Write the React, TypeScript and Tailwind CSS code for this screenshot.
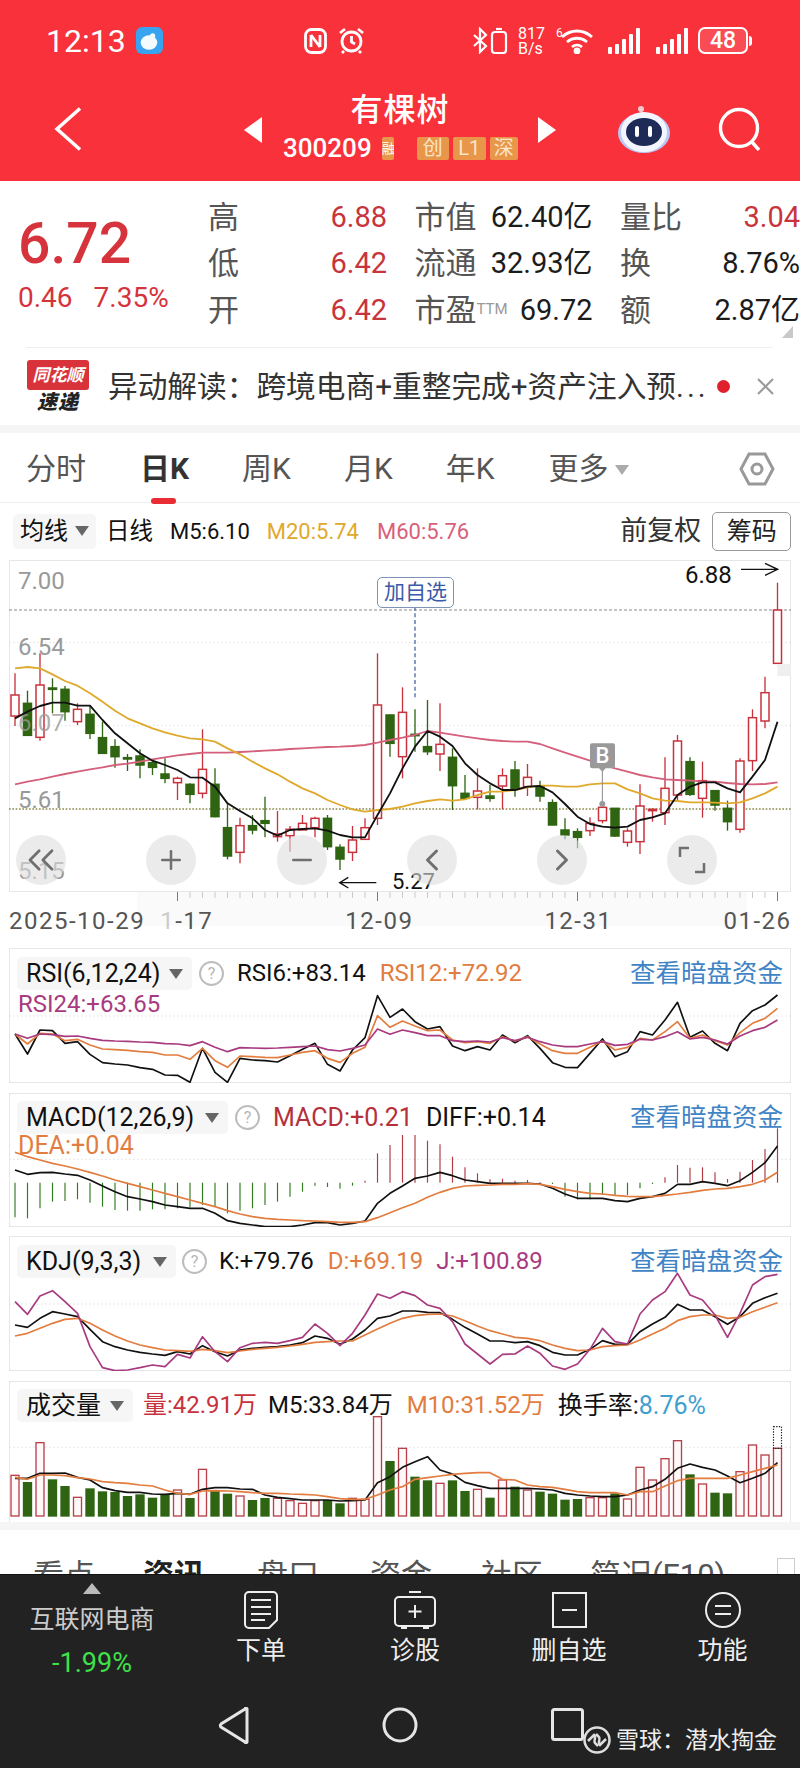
import type { ReactNode } from 'react';
import { ChevronLeft, ChevronRight, ChevronsLeft, Minus, Plus } from 'lucide-react';

const RED = '#c8323c';
const GREEN = '#2f6512';
const BLACK = '#111111';
const ORANGE = '#e27d3f';
const GOLD = '#dfa92c';
const PINK = '#d4607c';
const PURPLE = '#a83a7f';

// 蜡烛数据: [最高, 实体上, 实体下, 最低, 0红/1绿] 坐标为3倍像素
const candles: number[][] = [
  [700, 765, 828, 858, 0], [752, 790, 886, 888, 1], [640, 735, 892, 902, 0], [715, 744, 748, 820, 1],
  [738, 748, 815, 842, 1], [790, 808, 845, 855, 0], [795, 823, 880, 897, 1], [845, 893, 940, 940, 1],
  [898, 920, 950, 983, 1], [942, 953, 957, 993, 1], [928, 948, 975, 1015, 1], [958, 968, 982, 1005, 1],
  [955, 1002, 1015, 1030, 1], [1010, 1015, 1028, 1080, 0], [1030, 1033, 1063, 1090, 1], [868, 988, 1060, 1075, 0],
  [985, 1033, 1130, 1132, 1], [1090, 1163, 1248, 1258, 1], [1133, 1157, 1237, 1270, 0], [1125, 1157, 1170, 1183, 1],
  [1070, 1142, 1150, 1192, 1], [1113, 1182, 1190, 1205, 0], [1158, 1168, 1187, 1235, 0], [1125, 1150, 1170, 1170, 0],
  [1130, 1135, 1163, 1192, 0], [1125, 1135, 1220, 1230, 1], [1213, 1222, 1257, 1290, 1], [1158, 1200, 1237, 1263, 0],
  [1135, 1163, 1198, 1200, 0], [640, 795, 1135, 1155, 0], [823, 825, 910, 950, 1], [742, 817, 950, 1015, 0],
  [808, 883, 887, 935, 1], [780, 920, 935, 945, 1], [790, 913, 942, 993, 0], [925, 952, 1037, 1110, 1],
  [1005, 1060, 1075, 1075, 1], [985, 1053, 1072, 1108, 0], [1035, 1068, 1075, 1085, 1], [985, 1007, 1038, 1108, 0],
  [963, 990, 1045, 1070, 1], [972, 1012, 1040, 1068, 0], [1022, 1040, 1068, 1085, 1], [1078, 1088, 1155, 1155, 1],
  [1135, 1170, 1185, 1198, 1], [1165, 1175, 1192, 1225, 1], [1132, 1150, 1172, 1188, 0], [1095, 1102, 1142, 1150, 0],
  [1105, 1105, 1188, 1190, 1], [1165, 1173, 1207, 1220, 0], [1033, 1098, 1205, 1242, 0], [1105, 1108, 1112, 1145, 0],
  [952, 1045, 1118, 1155, 0], [885, 903, 1065, 1085, 0], [952, 965, 1063, 1068, 1], [965, 1022, 1075, 1133, 0],
  [1050, 1052, 1095, 1112, 1], [1082, 1105, 1145, 1172, 1], [955, 963, 1168, 1178, 0], [808, 833, 962, 993, 0],
  [710, 758, 843, 865, 0], [428, 510, 670, 670, 0],
];

const m5 = [835, 815, 798, 788, 788, 797, 797, 840, 880, 910, 940, 962, 975, 990, 1012, 1013, 1040, 1090, 1113, 1135, 1170, 1187, 1170, 1167, 1165, 1172, 1185, 1192, 1192, 1125, 1060, 985, 920, 873, 890, 918, 970, 1005, 1030, 1050, 1050, 1040, 1038, 1057, 1092, 1130, 1152, 1160, 1163, 1160, 1140, 1132, 1120, 1065, 1040, 1027, 1027, 1045, 1057, 1010, 960, 845];
const m20 = [685, 681, 685, 703, 723, 737, 760, 785, 812, 835, 850, 865, 877, 887, 895, 898, 905, 925, 943, 965, 985, 1003, 1025, 1045, 1060, 1080, 1095, 1108, 1115, 1110, 1107, 1100, 1090, 1083, 1078, 1082, 1078, 1065, 1055, 1055, 1050, 1042, 1037, 1037, 1040, 1040, 1033, 1030, 1030, 1048, 1060, 1075, 1082, 1083, 1087, 1087, 1088, 1090, 1087, 1075, 1060, 1040];
const m60 = [1033, 1025, 1018, 1010, 1002, 995, 988, 982, 975, 971, 965, 958, 952, 946, 942, 938, 938, 938, 936, 934, 932, 930, 927, 925, 923, 921, 920, 918, 915, 908, 900, 893, 885, 873, 878, 884, 890, 895, 900, 903, 905, 905, 912, 925, 938, 950, 962, 974, 985, 995, 1005, 1012, 1018, 1020, 1022, 1024, 1025, 1029, 1032, 1033, 1032, 1027];

const rsi6 = [282, 342, 270, 272, 310, 305, 343, 368, 372, 375, 383, 388, 405, 406, 427, 325, 397, 427, 355, 360, 362, 366, 347, 328, 310, 373, 393, 330, 293, 167, 232, 207, 245, 267, 260, 318, 332, 320, 330, 285, 308, 287, 325, 368, 382, 383, 340, 297, 350, 335, 275, 285, 240, 187, 292, 273, 310, 332, 250, 212, 195, 165];
const rsi12 = [282, 312, 280, 282, 302, 298, 315, 327, 329, 331, 335, 337, 345, 345, 358, 325, 362, 382, 348, 350, 352, 353, 345, 337, 332, 355, 367, 340, 322, 227, 262, 243, 258, 272, 270, 300, 308, 305, 310, 290, 303, 290, 312, 332, 340, 340, 322, 303, 330, 322, 295, 300, 275, 245, 295, 285, 302, 315, 278, 250, 235, 205];
const rsi24 = [282, 295, 282, 284, 289, 288, 295, 301, 303, 304, 306, 307, 311, 312, 317, 305, 322, 335, 323, 324, 325, 324, 322, 320, 318, 329, 333, 325, 315, 267, 283, 270, 278, 287, 287, 302, 305, 303, 306, 293, 302, 292, 305, 315, 320, 320, 312, 305, 316, 313, 298, 300, 290, 275, 297, 292, 300, 312, 288, 272, 262, 240];

const diff = [690, 703, 698, 697, 702, 706, 720, 738, 755, 770, 777, 785, 795, 800, 805, 805, 820, 842, 850, 855, 860, 860, 860, 855, 848, 848, 855, 850, 843, 790, 760, 738, 715, 708, 697, 707, 720, 725, 730, 730, 730, 730, 732, 745, 762, 775, 775, 775, 782, 785, 775, 770, 760, 733, 733, 725, 730, 737, 722, 697, 668, 618];
const dea = [637, 650, 660, 670, 678, 687, 697, 708, 720, 730, 740, 750, 760, 770, 780, 790, 800, 812, 822, 830, 835, 838, 840, 842, 843, 845, 847, 847, 845, 833, 818, 803, 790, 772, 757, 745, 738, 736, 735, 733, 733, 731, 733, 740, 748, 755, 760, 762, 766, 769, 770, 770, 766, 762, 757, 751, 747, 745, 740, 733, 720, 697];
const macdBars = [832, 835, 805, 785, 783, 778, 788, 800, 810, 812, 812, 808, 808, 805, 802, 795, 798, 820, 812, 805, 795, 785, 770, 755, 737, 741, 746, 737, 722, 640, 615, 585, 585, 602, 613, 650, 682, 700, 718, 716, 722, 720, 726, 732, 770, 778, 778, 765, 765, 765, 745, 732, 712, 675, 683, 682, 697, 717, 695, 660, 627, 565];

const kdjK = [285, 292, 265, 245, 252, 260, 298, 335, 350, 360, 367, 372, 376, 365, 372, 347, 365, 378, 360, 355, 352, 350, 345, 338, 318, 325, 343, 327, 300, 265, 258, 243, 243, 247, 248, 268, 292, 312, 333, 333, 338, 335, 347, 367, 375, 375, 358, 332, 343, 343, 305, 282, 262, 223, 240, 240, 260, 283, 260, 220, 203, 190];
const kdjD = [318, 310, 295, 280, 268, 265, 280, 300, 318, 333, 345, 353, 360, 362, 364, 358, 362, 368, 363, 358, 355, 352, 348, 343, 337, 335, 333, 333, 315, 297, 280, 265, 257, 253, 252, 258, 272, 288, 302, 312, 322, 325, 332, 345, 355, 362, 360, 350, 347, 345, 330, 312, 295, 272, 260, 255, 255, 265, 262, 245, 232, 218];
const kdjJ = [215, 253, 198, 182, 215, 250, 350, 413, 422, 420, 413, 405, 410, 373, 384, 320, 365, 395, 353, 340, 337, 340, 332, 322, 282, 310, 347, 310, 255, 192, 205, 185, 197, 225, 235, 275, 342, 372, 402, 373, 372, 348, 370, 408, 418, 402, 358, 295, 335, 342, 252, 210, 185, 130, 195, 210, 255, 322, 250, 165, 140, 133];

// 成交量: [柱顶, 0红/1绿]
const volume: number[][] = [
  [736, 0], [758, 1], [638, 0], [750, 1], [770, 1], [802, 0], [777, 1], [786, 1], [788, 1], [800, 1], [795, 1], [805, 1], [795, 1], [780, 0], [806, 1], [718, 0],
  [785, 1], [793, 1], [798, 0], [812, 1], [806, 1], [805, 0], [812, 0], [820, 0], [812, 0], [812, 1], [822, 1], [805, 0], [808, 0], [560, 0], [695, 1], [655, 0],
  [742, 1], [753, 1], [760, 0], [753, 1], [785, 1], [778, 0], [805, 1], [750, 0], [772, 1], [780, 0], [787, 1], [793, 1], [811, 1], [809, 1], [803, 0], [803, 0],
  [792, 1], [807, 0], [712, 0], [750, 0], [686, 0], [632, 0], [735, 1], [762, 0], [790, 1], [792, 1], [725, 0], [645, 0], [675, 0], [655, 0],
];
const volM5 = [745, 745, 730, 730, 729, 742, 750, 773, 782, 787, 787, 792, 793, 790, 793, 778, 773, 773, 777, 778, 795, 802, 806, 810, 810, 810, 813, 812, 810, 758, 740, 712, 695, 680, 720, 732, 757, 767, 775, 775, 775, 775, 777, 780, 790, 795, 798, 800, 800, 795, 780, 770, 748, 715, 702, 712, 720, 738, 758, 745, 730, 698];
const volM10 = [742, 748, 735, 735, 737, 743, 747, 755, 758, 760, 765, 768, 780, 790, 793, 783, 782, 783, 785, 788, 790, 790, 792, 793, 795, 800, 806, 808, 808, 795, 780, 770, 748, 743, 738, 733, 730, 728, 728, 748, 750, 765, 770, 772, 778, 785, 788, 788, 788, 795, 785, 785, 768, 752, 745, 745, 745, 745, 735, 725, 715, 705];

const xAt = (i: number) => 45 + 37.5 * i;

function Series({ data, color, width = 5 }: { data: number[]; color: string; width?: number }) {
  const points = data.map((y, i) => `${xAt(i)},${y}`).join(' ');
  return <polyline points={points} fill="none" stroke={color} strokeWidth={width} strokeLinejoin="round" />;
}

function GridLine({ y, color = '#e4e4e4', dash = '5 7', width = 3 }: { y: number; color?: string; dash?: string; width?: number }) {
  return <line x1={27} x2={2373} y1={y} y2={y} stroke={color} strokeWidth={width} strokeDasharray={dash} />;
}

// 指标面板的绘图层, y0 是面板顶部在3倍坐标里的位置
function Plot({ y0, h, children }: { y0: number; h: number; children: ReactNode }) {
  return (
    <svg className="absolute -left-px -top-px" width={782} height={h} viewBox={`27 ${y0} 2346 ${h * 3}`}>
      {children}
    </svg>
  );
}

function Caret({ className = 'text-[#666]' }: { className?: string }) {
  return (
    <svg width="14" height="10" viewBox="0 0 14 10" className={`shrink-0 ${className}`}>
      <path d="M0 0h14L7 10z" fill="currentColor" />
    </svg>
  );
}

function Help() {
  return (
    <span className="flex h-[25px] w-[25px] shrink-0 items-center justify-center rounded-full border-2 border-[#bdbdbd] text-[16px] leading-none text-[#b5b5b5]">
      ?
    </span>
  );
}

function DarkLink() {
  return <span className="ml-auto whitespace-nowrap text-[25.500px] leading-[33px] text-[#3f84c6]">查看暗盘资金</span>;
}

function Chip({ label, className }: { label: string; className: string }) {
  return (
    <div className={`flex h-[33px] shrink-0 items-center justify-between rounded-[5px] bg-[#f6f6f6] pl-[9px] pr-[9px] text-[25px] text-[#111] ${className}`}>
      <span className="whitespace-nowrap">{label}</span>
      <Caret />
    </div>
  );
}

function SignalBars({ className }: { className: string }) {
  return (
    <div className={`flex shrink-0 items-end gap-[3px] ${className}`}>
      {[7, 10, 15, 20, 26].map((h) => (
        <span key={h} className="w-[4px] rounded-[1px] bg-white" style={{ height: h }} />
      ))}
    </div>
  );
}

function StatusBar() {
  return (
    <div className="relative flex h-[80px] items-center pl-[46px] pt-[1px] text-white">
      <span className="w-[90px] shrink-0 text-[32px] leading-none">12:13</span>
      <svg className="shrink-0" width="27" height="27" viewBox="0 0 26 26">
        <rect width="26" height="26" rx="6" fill="#38a4ef" />
        <ellipse cx="12.500" cy="15" rx="8" ry="7" fill="#f4fbff" />
        <circle cx="16" cy="8.500" r="2.500" fill="#f4fbff" />
      </svg>
      <div className="ml-[141px] flex shrink-0 items-center gap-[11px]">
        <svg width="23" height="26" viewBox="0 0 23 26" fill="none" stroke="#fff" strokeWidth="2.800">
          <rect x="1.500" y="1.500" width="20" height="23" rx="6" />
          <path d="M7 7v12M7 7l9 12M16 7v12" />
        </svg>
        <svg width="27" height="27" viewBox="0 0 27 27" fill="none" stroke="#fff" strokeWidth="2.800">
          <circle cx="13.500" cy="14.500" r="9.500" />
          <path d="M13.500 9v6l3.500 2M2 6l5-4M25 6l-5-4M6 24l-2 2M21 24l2 2" />
        </svg>
      </div>
      <div className="ml-[107px] flex shrink-0 items-center">
        <svg width="36" height="27" viewBox="0 0 36 27" fill="none" stroke="#fff" strokeWidth="2.200">
          <path d="M2 8l12 11-6 6V2l6 6L2 19" />
          <rect x="20" y="5" width="14" height="21" rx="3" />
          <path d="M24 2h6" />
        </svg>
        <div className="ml-[10px] flex w-[30px] flex-col text-[16px] leading-[15px]">
          <span>817</span>
          <span>B/s</span>
        </div>
        <div className="relative ml-[8px] h-[27px] w-[38px]">
          <span className="absolute left-0 top-0 text-[12px] leading-none">6</span>
          <svg width="38" height="27" viewBox="0 0 38 27" fill="none" stroke="#fff" strokeWidth="2.800">
            <path d="M6 10c9-8 21-8 30 0M11 15c6-5 14-5 20 0M16 20c3-2.500 7-2.500 10 0" />
            <circle cx="21" cy="24" r="2" fill="#fff" />
          </svg>
        </div>
        <SignalBars className="ml-[14px]" />
        <SignalBars className="ml-[16px]" />
        <div className="ml-[10px] flex shrink-0 items-center gap-[1px]">
          <div className="flex h-[27px] w-[50px] items-center justify-center rounded-[7px] border-2 border-white bg-[#ffffff22] text-[23px] font-medium leading-none">
            48
          </div>
          <span className="h-[10px] w-[3px] rounded-r-sm bg-white" />
        </div>
      </div>
    </div>
  );
}

function TitleBar() {
  return (
    <div className="relative flex h-[101px] items-start text-white">
      <svg className="ml-[54px] mt-[27px]" width="28" height="44" viewBox="0 0 28 44" fill="none" stroke="#fff" strokeWidth="3.500">
        <path d="M26 1.500 3 22l23 20.500" />
      </svg>
      <svg className="ml-[162px] mt-[37px]" width="18" height="26" viewBox="0 0 18 26">
        <path d="M18 0v26L0 13z" fill="#fff" />
      </svg>
      <div className="flex w-[276px] flex-col items-center">
        <span className="mt-[11px] text-[32px] font-medium leading-[38px] tracking-[1px]">有棵树</span>
        <div className="mt-[7px] flex w-full items-center pl-[21px]">
          <span className="text-[26px] font-medium leading-[24px]">300209</span>
          <span className="ml-[10px] h-[23px] w-[12px] overflow-hidden rounded-[2px] bg-[#e8974a] text-[13px] leading-[23px] text-white">融</span>
          <div className="ml-[23px] flex gap-[4px] text-[20px] leading-[23px] text-[#fbe4c8]">
            <span className="h-[23px] w-[32px] rounded-[2px] bg-[#e8974a] text-center">创</span>
            <span className="h-[23px] w-[33px] rounded-[2px] bg-[#e8974a] text-center">L1</span>
            <span className="h-[23px] w-[28px] rounded-[2px] bg-[#e8974a] text-center">深</span>
          </div>
        </div>
      </div>
      <svg className="mt-[37px]" width="18" height="26" viewBox="0 0 18 26">
        <path d="M0 0v26l18-13z" fill="#fff" />
      </svg>
      <svg className="ml-[61px] mt-[25px]" width="54" height="48" viewBox="0 0 54 48">
        <circle cx="24" cy="4" r="3" fill="#f5c9d0" />
        <path d="M24 6l3 6" stroke="#f5c9d0" strokeWidth="2" />
        <ellipse cx="27" cy="28" rx="26" ry="20" fill="#b8c8f4" />
        <ellipse cx="27" cy="27" rx="23" ry="20" fill="#f4f6ff" />
        <ellipse cx="27" cy="27" rx="18" ry="14" fill="#1d2b56" />
        <rect x="18" y="21" width="4" height="11" rx="2" fill="#fff" />
        <rect x="31" y="21" width="4" height="11" rx="2" fill="#fff" />
      </svg>
      <svg className="ml-[47px] mt-[27px]" width="44" height="44" viewBox="0 0 44 44" fill="none" stroke="#fff" strokeWidth="3.400">
        <circle cx="21" cy="21" r="18.500" />
        <path d="M33 34l8 9" />
      </svg>
    </div>
  );
}

function QuoteCell({ label, value, red, ttm }: { label: string; value: string; red?: boolean; ttm?: boolean }) {
  return (
    <div className="flex h-[46.500px] items-center justify-between whitespace-nowrap">
      <span className="text-[31px] leading-none text-[#555]">
        {label}
        {ttm && <span className="relative -top-[7px] text-[15px] text-[#999]">TTM</span>}
      </span>
      <span className={`text-[29px] leading-none ${red ? 'text-[#c8343c]' : 'text-[#1c1c1c]'}`}>{value}</span>
    </div>
  );
}

function Quote() {
  return (
    <div className="relative flex h-[167px] pt-[13px]">
      <div className="w-[208px] shrink-0 pl-[18px] text-[#d6343c]">
        <div className="mt-[15px] text-[57px] font-medium leading-[70px]">6.72</div>
        <div className="mt-[3px] flex gap-[21px] text-[28px] leading-[32px]">
          <span>0.46</span>
          <span>7.35%</span>
        </div>
      </div>
      <div className="grid flex-1 auto-rows-[46.500px] content-start grid-cols-[179px_178px_180px] gap-x-[27.500px]">
        <QuoteCell label="高" value="6.88" red />
        <QuoteCell label="市值" value="62.40亿" />
        <QuoteCell label="量比" value="3.04" red />
        <QuoteCell label="低" value="6.42" red />
        <QuoteCell label="流通" value="32.93亿" />
        <QuoteCell label="换" value="8.76%" />
        <QuoteCell label="开" value="6.42" red />
        <QuoteCell label="市盈" value="69.72" ttm />
        <QuoteCell label="额" value="2.87亿" />
      </div>
      <span className="absolute bottom-[10px] right-[7px] h-0 w-0 border-b-[12px] border-l-[11px] border-b-[#c9c9c9] border-l-transparent" />
      <div className="absolute bottom-0 left-[26px] right-[27px] h-px bg-[#efefef]" />
    </div>
  );
}

function NewsRow() {
  return (
    <div className="flex h-[77px] items-center">
      <div className="ml-[27px] flex w-[62px] shrink-0 flex-col items-center">
        <div className="h-[30px] w-full rounded-[3px] bg-[#d8333a] text-center text-[17px] font-bold italic leading-[30px] text-white">同花顺</div>
        <div className="text-[20px] font-black italic leading-[24px] tracking-[1px] text-[#222]">速递</div>
      </div>
      <span className="ml-[19px] w-[596px] shrink-0 whitespace-nowrap text-[29.700px] leading-none text-[#333]">
        异动解读：跨境电商+重整完成+资产注入预<span className="tracking-[3px]">...</span>
      </span>
      <span className="ml-[13px] h-[13px] w-[13px] shrink-0 rounded-full bg-[#e0212d]" />
      <svg className="ml-[27px] shrink-0" width="17" height="17" viewBox="0 0 17 17" stroke="#999" strokeWidth="2">
        <path d="M1 1l15 15M16 1 1 16" />
      </svg>
    </div>
  );
}

function PeriodTabs() {
  return (
    <div className="relative flex h-[70px] items-center whitespace-nowrap border-b border-[#eeeeee] pt-[2px] text-[30px] text-[#555]">
      <span className="ml-[26px]">分时</span>
      <span className="relative ml-[54px] font-bold text-[#333]">
        日K
        <span className="absolute -bottom-[13px] left-[11px] h-[6px] w-[25px] rounded-full bg-[#ea2d35]" />
      </span>
      <span className="ml-[53px]">周K</span>
      <span className="ml-[53px]">月K</span>
      <span className="ml-[53px]">年K</span>
      <span className="ml-[54px]">更多</span>
      <Caret className="ml-[6px] mt-[2px] text-[#aaa]" />
      <svg className="ml-[110px] shrink-0" width="36" height="34" viewBox="0 0 36 34" fill="none" stroke="#999" strokeWidth="3">
        <path d="M10 2h16l8 15-8 15H10L2 17z" />
        <circle cx="18" cy="17" r="5" />
      </svg>
    </div>
  );
}

function IndicatorRow() {
  return (
    <div className="flex h-[57px] items-center whitespace-nowrap text-[22px]">
      <div className="ml-[13px] flex h-[35px] w-[83px] shrink-0 items-center justify-between rounded-[5px] bg-[#f6f6f6] px-[7px] pb-[2px] text-[24px] text-[#111]">
        <span>均线</span>
        <Caret />
      </div>
      <span className="ml-[10px] text-[23.500px] text-[#111]">日线</span>
      <span className="ml-[17px] text-[#111]">M5:6.10</span>
      <span className="ml-[17px] text-[#dfa92c]">M20:5.74</span>
      <span className="ml-[18px] text-[#d9607a]">M60:5.76</span>
      <span className="ml-[151px] text-[27px] text-[#333]">前复权</span>
      <span className="ml-[11px] flex h-[39px] w-[79px] shrink-0 items-center justify-center rounded-[5px] border border-[#999] text-[25px] text-[#222]">筹码</span>
    </div>
  );
}

function RoundButton({ left, children }: { left: string; children: ReactNode }) {
  return (
    <span className={`absolute top-[274px] flex h-[50px] w-[50px] items-center justify-center rounded-full bg-[#dddddd99] text-[#6f6f6f] ${left}`}>
      {children}
    </span>
  );
}

function MainChart() {
  return (
    <div className="relative ml-[9px] h-[332px] w-[782px] border border-[#e6e6e6] text-[24px] leading-none text-[#999]">
      <Plot y0={360} h={332}>
        <GridLine y={510} color="#888" dash="9 6" />
        <GridLine y={607} />
        <GridLine y={857} />
        <GridLine y={1107} color="#8d8a4a" dash="5 5" width={4} />
        <line x1={1245} x2={1245} y1={500} y2={780} stroke="#34579c" strokeWidth="3.500" strokeDasharray="12 8" />
        {candles.map(([hi, top, bottom, lo, down], i) => {
          const color = down ? GREEN : RED;
          const x = xAt(i);
          return (
            <g key={i}>
              <line x1={x} x2={x} y1={hi} y2={lo} stroke={color} strokeWidth="4" />
              <rect x={x - 12} y={top} width={24} height={bottom - top} fill={down ? GREEN : '#fff'} stroke={color} strokeWidth="4.500" />
            </g>
          );
        })}
        <Series data={m60} color={PINK} width={5.500} />
        <Series data={m20} color={GOLD} width={5.500} />
        <Series data={m5} color={BLACK} width={5.500} />
        <line x1={1807} x2={1807} y1={985} y2={1100} stroke="#888" strokeWidth="3" />
        <circle cx={1807} cy={1092} r={9} fill="#999" />
        <path d="M1776 910h63a6 6 0 0 1 6 6v63a6 6 0 0 1-6 6h-22l-10 10-10-10h-21a6 6 0 0 1-6-6v-63a6 6 0 0 1 6-6z" fill="#999" />
        <rect x={2332} y={672} width={41} height={36} fill="#efefef" />
        <path d="M1019 1328h110M1045 1312l-26 16 26 16" fill="none" stroke="#111" strokeWidth="4" />
        <path d="M2223 388h110M2295 370l38 18-38 18" fill="none" stroke="#111" strokeWidth="4" />
      </Plot>
      <span className="absolute left-[8px] top-[8px]">7.00</span>
      <span className="absolute left-[8px] top-[74px]">6.54</span>
      <span className="absolute left-[8px] top-[150px] text-[#9a9a9acc]">6.07</span>
      <span className="absolute left-[8px] top-[227px]">5.61</span>
      <span className="absolute left-[8px] top-[298px]">5.15</span>
      <span className="absolute left-[580px] top-[182px] flex h-[25px] w-[25px] items-center justify-center text-[22px] font-medium text-white">B</span>
      <span className="absolute left-[367px] top-[16px] flex h-[31px] w-[77px] items-center justify-center rounded-[5px] border border-[#7f92b8] bg-white text-[21px] text-[#3b5aa8]">加自选</span>
      <span className="absolute left-[675px] top-[2px] text-[#111]">6.88</span>
      <span className="absolute left-[382px] top-[310px] text-[22px] text-[#111]">5.27</span>
      <RoundButton left="left-[6px]"><ChevronsLeft size={44} strokeWidth={1.500} /></RoundButton>
      <RoundButton left="left-[136px]"><Plus size={30} strokeWidth={2} /></RoundButton>
      <RoundButton left="left-[267px]"><Minus size={30} strokeWidth={2} /></RoundButton>
      <RoundButton left="left-[397px]"><ChevronLeft size={36} strokeWidth={2} /></RoundButton>
      <RoundButton left="left-[527px]"><ChevronRight size={36} strokeWidth={2} /></RoundButton>
      <RoundButton left="left-[657px]">
        <svg width="28" height="28" viewBox="0 0 28 28" fill="none" stroke="#6f6f6f" strokeWidth="2.500">
          <path d="M2 11V2h9M26 17v9h-9" />
        </svg>
      </RoundButton>
    </div>
  );
}

function DateAxis() {
  const ticks = Array.from({ length: 49 }, (_, i) => 13 + i);
  return (
    <div className="relative h-[56px]">
      <div className="absolute left-[137px] top-0 h-[34px] w-[610px] bg-[#fafafa]" />
      <svg className="relative block" width={800} height={9} viewBox="0 0 800 9">
        {ticks.map((i) => {
          const x = xAt(i) / 3;
          const long = i === 13 || i === 29 || i === 45 || i === 61;
          return <line key={i} x1={x} x2={x} y1={0} y2={long ? 9 : 6} stroke={long ? '#777' : '#c9c9c9'} strokeWidth="1" />;
        })}
      </svg>
      <div className="relative mt-[6px] flex whitespace-nowrap text-[24px] leading-[28px] tracking-[1.500px] text-[#555]">
        <span className="ml-[9px] shrink-0">2025-10-29</span>
        <span className="ml-[15px] shrink-0">
          <span className="text-[#ccc]">1</span>-17
        </span>
        <span className="ml-[132px] shrink-0">12-09</span>
        <span className="ml-[131px] shrink-0">12-31</span>
        <span className="ml-[111px] shrink-0">01-26</span>
      </div>
    </div>
  );
}

function RsiPanel() {
  return (
    <div className="relative ml-[9px] h-[135px] w-[782px] border border-[#e6e6e6]">
      <Plot y0={24} h={135}>
        <GridLine y={228} />
        <Series data={rsi6} color={BLACK} />
        <Series data={rsi12} color={ORANGE} />
        <Series data={rsi24} color={PURPLE} />
      </Plot>
      <div className="relative flex items-center whitespace-nowrap px-[7px] pt-[8px] text-[24px] leading-[33px]">
        <Chip label="RSI(6,12,24)" className="w-[175px]" />
        <span className="ml-[7px]"><Help /></span>
        <span className="ml-[13px] text-[#111]">RSI6:+83.14</span>
        <span className="ml-[14px] text-[#e27d3f]">RSI12:+72.92</span>
        <DarkLink />
      </div>
      <div className="relative pl-[8px] text-[24px] leading-[28px] text-[#a83a7f]">RSI24:+63.65</div>
    </div>
  );
}

function MacdPanel() {
  return (
    <div className="relative ml-[9px] h-[134px] w-[782px] border border-[#e6e6e6]">
      <Plot y0={459} h={134}>
        <GridLine y={658} />
        {macdBars.map((y, i) => (
          <line key={i} x1={xAt(i)} x2={xAt(i)} y1={728} y2={y} stroke={y > 728 ? '#2f7d1e' : '#b23a42'} strokeWidth="3.500" />
        ))}
        <Series data={diff} color={BLACK} />
        <Series data={dea} color={ORANGE} />
      </Plot>
      <div className="relative flex items-center whitespace-nowrap px-[7px] pt-[7px] text-[25px] leading-[33px]">
        <Chip label="MACD(12,26,9)" className="w-[211px]" />
        <span className="ml-[7px]"><Help /></span>
        <span className="ml-[13px] text-[#b5303a]">MACD:+0.21</span>
        <span className="ml-[13px] text-[#111]">DIFF:+0.14</span>
        <DarkLink />
      </div>
      <div className="relative pl-[8px] text-[25px] leading-[24px] text-[#e27d3f]">DEA:+0.04</div>
    </div>
  );
}

function KdjPanel() {
  return (
    <div className="relative ml-[9px] h-[135px] w-[782px] border border-[#e6e6e6]">
      <Plot y0={18} h={135}>
        <GridLine y={222} />
        <Series data={kdjK} color={BLACK} />
        <Series data={kdjD} color={ORANGE} />
        <Series data={kdjJ} color={PURPLE} />
      </Plot>
      <div className="relative flex items-center whitespace-nowrap px-[7px] pt-[8px] text-[24px] leading-[33px]">
        <Chip label="KDJ(9,3,3)" className="w-[159px]" />
        <span className="ml-[6px]"><Help /></span>
        <span className="ml-[12px] text-[#111]">K:+79.76</span>
        <span className="ml-[14px] text-[#e27d3f]">D:+69.19</span>
        <span className="ml-[13px] text-[#a83a7f]">J:+100.89</span>
        <DarkLink />
      </div>
    </div>
  );
}

function VolumePanel() {
  return (
    <div className="relative ml-[9px] h-[141px] w-[782px] border-x border-t border-[#e6e6e6]">
      <Plot y0={453} h={141}>
        <GridLine y={652} />
        {volume.map(([top, down], i) => (
          <rect
            key={i}
            x={xAt(i) - 12}
            y={top}
            width={24}
            height={858 - top}
            fill={down ? GREEN : '#fff9f9'}
            stroke={down ? GREEN : '#b8404a'}
            strokeWidth="4"
          />
        ))}
        <rect x={xAt(61) - 12} y={590} width={24} height={65} fill="none" stroke="#222" strokeWidth="3.500" strokeDasharray="4 4" />
        <Series data={volM5} color={BLACK} />
        <Series data={volM10} color={ORANGE} />
      </Plot>
      <div className="relative flex items-center whitespace-nowrap px-[7px] pt-[7px] text-[24px] leading-[33px]">
        <Chip label="成交量" className="w-[116px]" />
        <span className="ml-[10px] text-[#c8323c]">量:42.91万</span>
        <span className="ml-[11px] text-[#111]">M5:33.84万</span>
        <span className="ml-[14px] text-[#e27d3f]">M10:31.52万</span>
        <span className="ml-[13px] text-[25px] text-[#111]">
          换手率:<span className="text-[#3fa0d0]">8.76%</span>
        </span>
      </div>
    </div>
  );
}

function NewsTabs() {
  return (
    <div className="flex h-[44px] overflow-hidden whitespace-nowrap pt-[28px] text-[31px] leading-[36px] text-[#555]">
      <span className="ml-[33px] shrink-0">看点</span>
      <span className="ml-[48px] shrink-0 font-bold text-[#222]">资讯</span>
      <span className="ml-[52px] shrink-0">盘口</span>
      <span className="ml-[51px] shrink-0">资金</span>
      <span className="ml-[49px] shrink-0">社区</span>
      <span className="ml-[47px] shrink-0">简况(F10)</span>
      <span className="ml-[52px] h-[30px] w-[18px] shrink-0 border border-[#ccc]" />
    </div>
  );
}

function ToolButton({ label, width, icon }: { label: string; width: string; icon: ReactNode }) {
  return (
    <div className={`flex flex-col items-center ${width}`}>
      <div className="flex h-[40px] items-center">{icon}</div>
      <span className="mt-[6px] whitespace-nowrap text-[25px] leading-[30px] text-[#eee]">{label}</span>
    </div>
  );
}

function BottomBar() {
  return (
    <div className="h-[194px] border-t border-[#111] bg-[#222] text-[#eee]">
      <div className="flex h-[118px]">
        <div className="flex w-[184px] shrink-0 flex-col items-center">
          <span className="mt-[8px] h-0 w-0 border-x-[9px] border-b-[11px] border-x-transparent border-b-[#bbb]" />
          <span className="mt-[11px] whitespace-nowrap text-[25px] leading-[30px] text-[#ccc]">互联网电商</span>
          <span className="mt-[12px] text-[27px] leading-[32px] text-[#3fe04a]">-1.99%</span>
        </div>
        <div className="mt-[15px] flex">
          <ToolButton
            label="下单"
            width="w-[154px]"
            icon={
              <svg width="34" height="38" viewBox="0 0 34 38" fill="none" stroke="#eee" strokeWidth="2">
                <path d="M5 1h24a4 4 0 0 1 4 4v24l-8 8H5a4 4 0 0 1-4-4V5a4 4 0 0 1 4-4z" />
                <path d="M7 9h20M7 16h20M7 23h20M7 29h14" />
              </svg>
            }
          />
          <ToolButton
            label="诊股"
            width="w-[154px]"
            icon={
              <svg width="42" height="38" viewBox="0 0 42 38" fill="none" stroke="#eee" strokeWidth="2">
                <rect x="1" y="6" width="40" height="29" rx="4" />
                <path d="M15 1h12M21 14v13M14.500 20.500h13M7 37h6M29 37h6" />
              </svg>
            }
          />
          <ToolButton
            label="删自选"
            width="w-[154px]"
            icon={
              <svg width="35" height="36" viewBox="0 0 35 36" fill="none" stroke="#eee" strokeWidth="2">
                <rect x="1" y="1" width="33" height="34" />
                <path d="M10 18h15" />
              </svg>
            }
          />
          <ToolButton
            label="功能"
            width="w-[153px]"
            icon={
              <svg width="36" height="36" viewBox="0 0 36 36" fill="none" stroke="#eee" strokeWidth="2">
                <circle cx="18" cy="18" r="17" />
                <path d="M10 14h16M10 22h16" />
              </svg>
            }
          />
        </div>
      </div>
      <div className="relative flex h-[75px] items-start pt-[14px]">
        <svg className="ml-[218px]" width="32" height="37" viewBox="0 0 32 37" fill="none" stroke="#e5e5e5" strokeWidth="3">
          <path d="M29 2.500v32a1 1 0 0 1-2 .5L3 20a2 2 0 0 1 0-3L27 2a1 1 0 0 1 2 .5z" />
        </svg>
        <svg className="ml-[132px]" width="36" height="36" viewBox="0 0 36 36" fill="none" stroke="#e5e5e5" strokeWidth="3">
          <circle cx="18" cy="18" r="16" />
        </svg>
        <svg className="ml-[133px] mt-[1px]" width="33" height="33" viewBox="0 0 33 33" fill="none" stroke="#e5e5e5" strokeWidth="3">
          <rect x="1.500" y="1.500" width="30" height="30" rx="2" />
        </svg>
        <div className="absolute left-[583px] top-[33px] flex items-center">
          <svg width="28" height="28" viewBox="0 0 28 28" fill="none" stroke="#ddd" strokeWidth="2.500">
            <circle cx="14" cy="14" r="12.500" />
            <path d="M5 15l6-6c3 3-1 5 1 8l3 3M23 13l-6 6c-3-3 1-5-1-8l-3-3" />
          </svg>
          <span className="ml-[5px] whitespace-nowrap text-[23px] leading-none text-[#eee]">雪球：潜水掏金</span>
        </div>
      </div>
    </div>
  );
}

export default function App() {
  return (
    <div
      className="h-[1768px] w-[800px] overflow-hidden bg-white"
      style={{ fontFamily: 'Roboto, "Noto Sans CJK SC", sans-serif' }}
    >
      <div className="bg-[#f9313a]">
        <StatusBar />
        <TitleBar />
      </div>
      <Quote />
      <NewsRow />
      <div className="h-[8px] bg-[#f5f5f5]" />
      <PeriodTabs />
      <IndicatorRow />
      <MainChart />
      <DateAxis />
      <RsiPanel />
      <div className="h-[10px]" />
      <MacdPanel />
      <div className="h-[9px]" />
      <KdjPanel />
      <div className="h-[10px]" />
      <VolumePanel />
      <div className="h-[8px] bg-[#f5f5f5]" />
      <NewsTabs />
      <BottomBar />
    </div>
  );
}
